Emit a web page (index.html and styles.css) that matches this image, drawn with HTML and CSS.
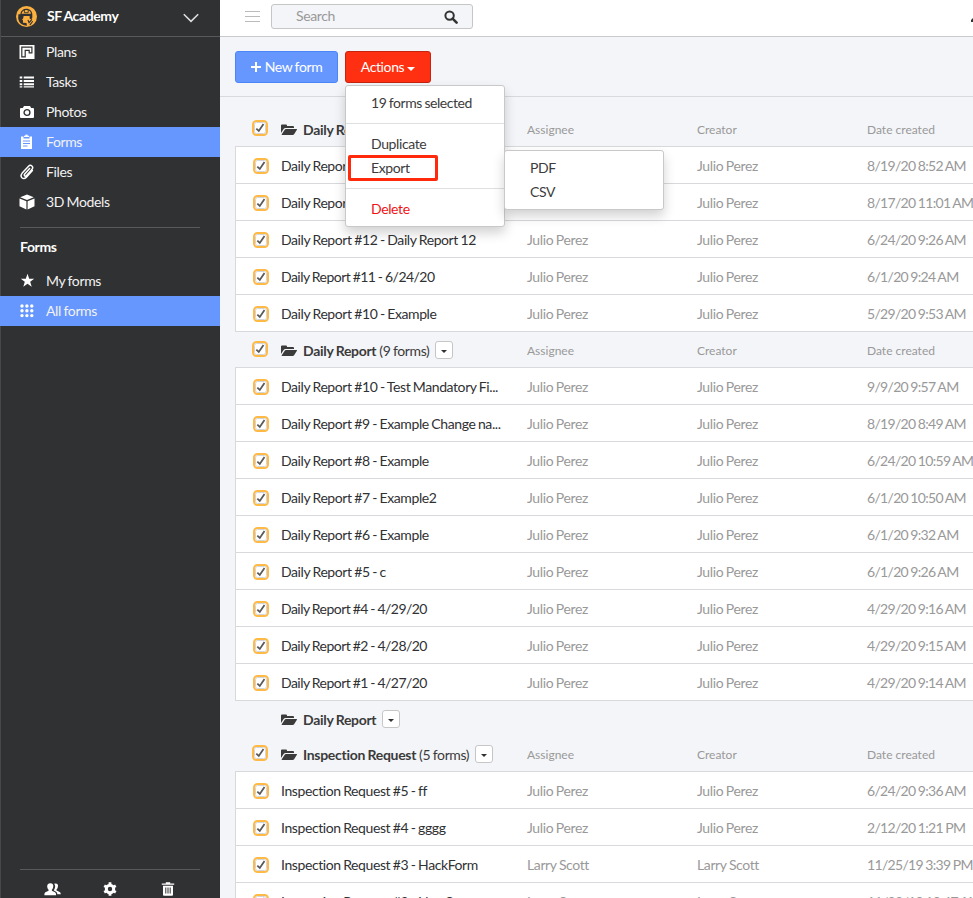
FILE: index.html
```html
<!DOCTYPE html>
<html lang="en">
<head>
<meta charset="utf-8">
<title>SF Academy - Forms</title>
<link rel="stylesheet" href="styles.css">
</head>
<body>
<svg class="defs" aria-hidden="true">
  <symbol id="check" viewBox="0 0 16 16"><rect x="1" y="1" width="14" height="14" rx="3.5" fill="#fff" stroke="#ffb945" stroke-width="2"/><rect x="2.5" y="2.5" width="11" height="11" rx="2" fill="#fff" stroke="#d3d5da"/><path d="M4.300 8.700l2.500 2.300 4.700-7" fill="none" stroke="#5a5a5a" stroke-width="1.800"/></symbol>
  <symbol id="folder" viewBox="0 0 17 12"><path d="M0 9V1.5Q0 .5 1 .5h4q1 0 1 1V2h6q1 0 1 1v1H4.5Q3.300 4 2.600 5z" fill="#3b3b3b"/><path d="M.6 10.600L3.700 5.700Q4 5 5 5h10.500q.9 0 .4.8l-2.800 4.400q-.5.8-1.400.8H1q-.6 0-.4-.4z" fill="#3b3b3b"/></symbol>
</svg>
<div class="app">
  <aside class="side">
    <header class="brand">
      <svg class="logo" viewBox="0 0 22 22"><circle cx="11" cy="11" r="11" fill="#fbb040"/><path d="M2.500 8.700h2C5 5 7.500 3 10.800 3s6 2.300 6.300 5.700v3.500l-1.200 2-1.600-1V10.500H8l-.5 2.700-1.200 1 1 .7v2.600l3.700.3.500 2.800-3-.4Q3.200 18.600 2.300 13z" fill="#303133"/><path d="M5.800 8.200Q6.500 4.300 10.800 4.200t5 4z" fill="#fbb040"/><path d="M8.800 4v3h4V4" fill="none" stroke="#303133" stroke-width=".9"/><path d="M12.500 14.500l1.200 3 3-3.500M14.500 20l3-4" fill="none" stroke="#303133" stroke-width="1.200"/></svg>
      <b>SF Academy</b>
      <svg class="chev" viewBox="0 0 16 10"><path d="M.8 1.200L8 8.400l7.200-7.200" fill="none" stroke="#ddd" stroke-width="1.600"/></svg>
    </header>
    <nav>
      <a class="item"><svg viewBox="0 0 16 16"><path fill="#fff" d="M.5 1h15v14H.5z"/><path fill="none" stroke="#303133" stroke-width="1.200" d="M12.900 8.800V3.200H2.800v9.600h3.400V6.300h4v2.500z"/></svg>Plans</a>
      <a class="item"><svg viewBox="0 0 16 16"><path fill="#fff" d="M.7 2.500h2.600v2H.7zM4.700 2.500H15v2H4.700zM.7 5.900h2.600v2H.7zM4.700 5.900H15v2H4.700zM.7 9.300h2.600v2H.7zM4.700 9.300H15v2H4.700zM.7 12.200h2.600v1.200H.7zM4.700 12.200H15v1.200H4.700z"/></svg>Tasks</a>
      <a class="item"><svg viewBox="0 0 16 16"><path fill="#fff" d="M5 2h6l1.200 2H14q1 0 1 1v8q0 1-1 1H2q-1 0-1-1V5q0-1 1-1h1.800z"/><circle cx="8" cy="8.500" r="2.900" fill="none" stroke="#303133" stroke-width="1.400"/></svg>Photos</a>
      <a class="item on"><svg viewBox="0 0 16 16"><path fill="#fff" d="M2 2.500h2.500v2h6v-2H13V15H2zM5 3V1.800h1.200Q6.300.4 7.500.4t1.300 1.400H10V3z"/><path stroke="#6697ff" d="M4 7h7M4 9.500h7M4 12h4.500"/></svg>Forms</a>
      <a class="item"><svg viewBox="0 0 16 16"><path fill="none" stroke="#fff" stroke-width="1.500" stroke-linecap="round" d="M10.600 4.500L5.700 10q-1 1.400.2 2 .9.500 1.700-.4l5.300-6q1.600-2.200 0-3.600-1.800-1.500-3.600.4L3.200 9.100q-2.200 2.700-.3 4.700 2.100 1.800 4.500-.6l6-6.600"/></svg>Files</a>
      <a class="item"><svg viewBox="0 0 16 16"><path fill="#fff" d="M8 .5l6.800 2.700L8 6 1.200 3.200zM.5 4.500l6.900 2.700v8.200L.5 12.300zM15.500 4.500L8.600 7.200v8.200l6.900-3.100z"/></svg>3D Models</a>
    </nav>
    <h2>Forms</h2>
    <nav>
      <a class="item"><svg viewBox="0 0 16 16"><path fill="#fff" d="M8.500.8l1.700 4.900h5l-4 3 1.500 5-4.200-3-4.200 3 1.500-5-4-3h5z"/></svg>My forms</a>
      <a class="item on"><svg viewBox="0 0 16 16"><path stroke="#fff" stroke-width="3.400" stroke-linecap="round" stroke-dasharray="0 4.900" d="M3 3h10M3 7.800h10M3 12.600h10"/></svg>All forms</a>
    </nav>
    <footer class="tools">
      <svg viewBox="0 0 16 14"><path fill="#fff" d="M6 1c2.200 0 3 1.400 2.700 3.300Q8.500 6 7.400 7.200v1l3 1.500q1 .6 1 2.800H.3q0-2.200 1-2.800l3-1.500v-1Q3.200 6 3 4.300 2.800 1 6 1zM9.500 1.500q3.500-1 3.700 1.800 0 2.500-1.400 3.800v.9l2.900 1.300q1.100.5 1.100 2.200h-3.200q-.1-1.700-1.200-2.300L9.300 8l.2-.8q1-1.500 1-3.300 0-1.400-1-2.400z"/></svg>
      <svg viewBox="0 0 14 14"><circle cx="7" cy="7" r="3.700" fill="none" stroke="#fff" stroke-width="3"/><path d="M7 .3v2.500M7 11.200v2.500M1.200 3.700l2.100 1.200M10.700 9.100l2.100 1.200M1.200 10.300l2.100-1.200M10.700 4.900l2.100-1.200" stroke="#fff" stroke-width="2.800"/></svg>
      <svg viewBox="0 0 14 14"><path fill="#fff" d="M.8 1.500h4V.3h4.400v1.200h4v1.300H.8zM2 3.700h10v9q0 1-1 1H3q-1 0-1-1z"/><path stroke="#303133" d="M4.800 5.500v6M7 5.500v6M9.200 5.500v6"/></svg>
    </footer>
  </aside>
  <main>
    <div class="top">
      <div class="burger"><i></i><i></i><i></i></div>
      <div class="search"><span>Search</span><svg viewBox="0 0 14 14"><circle cx="5.600" cy="5.600" r="4.200" fill="none" stroke="#333" stroke-width="2"/><path d="M8.600 8.600l4 4" stroke="#333" stroke-width="2.600" stroke-linecap="round"/></svg></div>
      <svg class="edge" viewBox="0 0 2 4"><path d="M2 0v4H0V2z" fill="#333"/></svg>
    </div>
    <div class="bar">
      <button class="btn new"><svg viewBox="0 0 10 10"><path d="M5 0v10M0 5h10" stroke="#fff" stroke-width="2"/></svg>New form</button>
      <div class="drop">
        <button class="btn act">Actions<i class="caret"></i></button>
        <div class="menu">
          <div class="count">19 forms selected</div>
          <div class="mid"><div>Duplicate</div><div class="export">Export<span class="mark"></span><div class="sub"><div>PDF</div><div>CSV</div></div></div></div>
          <div class="del">Delete</div>
        </div>
      </div>
    </div>
    <section class="group first">
      <div class="head cols"><svg class="ck"><use href="#check"/></svg><div class="title"><svg><use href="#folder"/></svg><b>Daily Report</b></div><span>Assignee</span><span>Creator</span><span>Date created</span></div>
      <div class="list">
        <div class="row cols"><svg class="ck"><use href="#check"/></svg><p>Daily Report</p><span></span><span>Julio Perez</span><span class="date">8/19/20 8:52 AM</span></div>
        <div class="row cols"><svg class="ck"><use href="#check"/></svg><p>Daily Report</p><span></span><span>Julio Perez</span><span class="date">8/17/20 11:01 AM</span></div>
        <div class="row cols"><svg class="ck"><use href="#check"/></svg><p>Daily Report #12 - Daily Report 12</p><span>Julio Perez</span><span>Julio Perez</span><span class="date">6/24/20 9:26 AM</span></div>
        <div class="row cols"><svg class="ck"><use href="#check"/></svg><p class="dated">Daily Report #11 - 6/24/20</p><span>Julio Perez</span><span>Julio Perez</span><span class="date">6/1/20 9:24 AM</span></div>
        <div class="row cols"><svg class="ck"><use href="#check"/></svg><p>Daily Report #10 - Example</p><span>Julio Perez</span><span>Julio Perez</span><span class="date">5/29/20 9:53 AM</span></div>
      </div>
    </section>
    <section class="group">
      <div class="head cols"><svg class="ck"><use href="#check"/></svg><div class="title"><svg><use href="#folder"/></svg><b>Daily Report</b><span>(9 forms)</span><button><i class="caret"></i></button></div><span>Assignee</span><span>Creator</span><span>Date created</span></div>
      <div class="list">
        <div class="row cols"><svg class="ck"><use href="#check"/></svg><p>Daily Report #10 - Test Mandatory Fi...</p><span>Julio Perez</span><span>Julio Perez</span><span class="date">9/9/20 9:57 AM</span></div>
        <div class="row cols"><svg class="ck"><use href="#check"/></svg><p>Daily Report #9 - Example Change na...</p><span>Julio Perez</span><span>Julio Perez</span><span class="date">8/19/20 8:49 AM</span></div>
        <div class="row cols"><svg class="ck"><use href="#check"/></svg><p>Daily Report #8 - Example</p><span>Julio Perez</span><span>Julio Perez</span><span class="date">6/24/20 10:59 AM</span></div>
        <div class="row cols"><svg class="ck"><use href="#check"/></svg><p>Daily Report #7 - Example2</p><span>Julio Perez</span><span>Julio Perez</span><span class="date">6/1/20 10:50 AM</span></div>
        <div class="row cols"><svg class="ck"><use href="#check"/></svg><p>Daily Report #6 - Example</p><span>Julio Perez</span><span>Julio Perez</span><span class="date">6/1/20 9:32 AM</span></div>
        <div class="row cols"><svg class="ck"><use href="#check"/></svg><p>Daily Report #5 - c</p><span>Julio Perez</span><span>Julio Perez</span><span class="date">6/1/20 9:26 AM</span></div>
        <div class="row cols"><svg class="ck"><use href="#check"/></svg><p class="dated">Daily Report #4 - 4/29/20</p><span>Julio Perez</span><span>Julio Perez</span><span class="date">4/29/20 9:16 AM</span></div>
        <div class="row cols"><svg class="ck"><use href="#check"/></svg><p class="dated">Daily Report #2 - 4/28/20</p><span>Julio Perez</span><span>Julio Perez</span><span class="date">4/29/20 9:15 AM</span></div>
        <div class="row cols"><svg class="ck"><use href="#check"/></svg><p class="dated">Daily Report #1 - 4/27/20</p><span>Julio Perez</span><span>Julio Perez</span><span class="date">4/29/20 9:14 AM</span></div>
      </div>
    </section>
    <section class="group">
      <div class="head cols"><i></i><div class="title"><svg><use href="#folder"/></svg><b>Daily Report</b><button><i class="caret"></i></button></div></div>
    </section>
    <section class="group">
      <div class="head cols"><svg class="ck"><use href="#check"/></svg><div class="title"><svg><use href="#folder"/></svg><b>Inspection Request</b><span>(5 forms)</span><button><i class="caret"></i></button></div><span>Assignee</span><span>Creator</span><span>Date created</span></div>
      <div class="list">
        <div class="row cols"><svg class="ck"><use href="#check"/></svg><p>Inspection Request #5 - ff</p><span>Julio Perez</span><span>Julio Perez</span><span class="date">6/24/20 9:36 AM</span></div>
        <div class="row cols"><svg class="ck"><use href="#check"/></svg><p>Inspection Request #4 - gggg</p><span>Julio Perez</span><span>Julio Perez</span><span class="date">2/12/20 1:21 PM</span></div>
        <div class="row cols"><svg class="ck"><use href="#check"/></svg><p>Inspection Request #3 - HackForm</p><span>Larry Scott</span><span>Larry Scott</span><span class="date">11/25/19 3:39 PM</span></div>
        <div class="row cols"><svg class="ck"><use href="#check"/></svg><p>Inspection Request #2 - NewScan</p><span>Larry Scott</span><span>Larry Scott</span><span class="date">11/22/19 10:47 AM</span></div>
      </div>
    </section>
  </main>
</div>
</body>
</html>
```
FILE: styles.css
```css
* { box-sizing: border-box; }
body { margin: 0; font: 14px/20px Lato, "Liberation Sans", sans-serif; letter-spacing: -.38px; word-spacing: -.6px; color: #303133; overflow: hidden; }
b { font-weight: 700; }
p { margin: 0; }
button { font: inherit; padding: 0; letter-spacing: inherit; word-spacing: inherit; }
.defs { display: none; }
.app { display: flex; width: 973px; height: 898px; overflow: hidden; background: #f4f5f8; }
.side { width: 220px; flex: none; display: flex; flex-direction: column; background: #303133; color: #fff; border-left: 1px solid #47484b; }
.brand { height: 37px; flex: none; display: flex; align-items: center; padding: 0 20px 4px 15px; border-bottom: 1px solid #58595b; }
.logo { width: 21px; height: 21px; margin: 1px 10px 0 0; }
.chev { width: 16px; height: 10px; margin-left: auto; margin-right: 1px; margin-top: 4px; }
.item { height: 30px; display: flex; align-items: center; padding-left: 19px; color: #f2f2f2; margin-left: -1px; }
.item svg { width: 16px; height: 16px; margin-right: 11px; }
.on { background: #6697ff; }
.side h2 { margin: 10px 20px 0 19px; padding-top: 9px; height: 39px; border-top: 1px solid #58595b; font-size: 14px; line-height: 20px; }
.tools { height: 29px; margin: auto 20px 0 19px; border-top: 1px solid #58595b; display: flex; justify-content: space-between; align-items: flex-start; padding: 12px 25px 0 24px; }
.tools svg { width: 14px; height: 14px; }
.tools svg:first-child { width: 17px; height: 15px; margin-right: -2px; }
main { width: 753px; flex: none; }
.top { height: 37px; display: flex; align-items: flex-start; background: #fff; border-bottom: 1px solid #c9cacc; padding: 4px 0 0 25px; }
.burger { width: 15px; padding-top: 7px; display: flex; flex-direction: column; gap: 4px; margin-right: 11px; }
.burger i { height: 1px; background: #bbb; }
.search { width: 202px; height: 25px; border: 1px solid #c6c6c6; border-radius: 3px; background: #f4f5f8; color: #999; display: flex; align-items: center; justify-content: space-between; padding: 0 14px 1px 24px; }
.search svg { width: 14px; height: 14px; margin-top: 1px; }
.edge { width: 2px; height: 4px; margin: 14px 0 0 auto; }
.bar { height: 60px; display: flex; gap: 7px; padding: 14px 15px; border-bottom: 1px solid #d8d9dc; }
.btn { height: 32px; border: 1px solid #4a86f7; border-radius: 3px; background: #6697ff; color: #fff; display: flex; align-items: center; justify-content: center; }
.new { width: 103px; }
.new svg { width: 10px; height: 10px; margin-right: 4px; }
.act { width: 86px; background: #ff2f12; border-color: #c52410; }
.caret { border: 4px solid transparent; border-top-color: currentColor; border-bottom: 0; margin: 3px 0 0 3px; }
.drop { position: relative; }
.menu, .sub { position: absolute; background: #fff; border: 1px solid #c8c8c8; border-radius: 3px; box-shadow: 0 6px 12px rgba(0,0,0,.18); color: #3c3c3c; }
.menu { left: 0; top: 34px; width: 160px; height: 142px; z-index: 2; line-height: 24px; }
.menu > div { padding-left: 25px; }
.count { height: 38px; padding-top: 5px; border-bottom: 1px solid #dedfe1; letter-spacing: -.45px; }
.mid { height: 65px; padding-top: 8px; border-bottom: 1px solid #dedfe1; }
.del { padding-top: 8px; color: #f01414; }
.export { position: relative; }
.mark { position: absolute; left: -23px; top: -1px; width: 90px; height: 26px; border: 3px solid #ff2a0c; border-radius: 2px; }
.sub { left: 133px; top: -6px; width: 160px; height: 60px; padding: 5px 0 0 25px; }
.group { padding-left: 15px; }
.cols { display: grid; grid-template-columns: 28px 246px 170px 170px 124px; align-items: center; }
.ck { width: 16px; height: 16px; }
.head { height: 35px; padding-left: 18px; color: #999; font-size: 12px; }
.first .head { height: 49px; padding-top: 14px; }
.head .ck { margin: -1px 0 0 -1px; }
.title { display: flex; align-items: center; font-size: 14px; color: #3b3b3b; padding-top: 3px; }
.title b { letter-spacing: -.3px; }
.head > span { padding-top: 3px; letter-spacing: 0; word-spacing: 0; }
.title > svg { width: 17px; height: 12px; margin-right: 5px; }
.title span { margin-left: 3px; }
.title button { width: 18px; height: 18px; margin: -2px 0 0 6px; border: 1px solid #c6c6c6; border-radius: 3px; background: #fff; display: flex; align-items: center; justify-content: center; color: #303133; }
.title .caret { margin: 2px 0 0; border-width: 3px; border-bottom: 0; }
.list { border: 1px solid #d8d9dc; border-width: 1px 0 0 1px; background: #fff; }
.row { height: 37px; padding: 2px 0 0 17px; border-bottom: 1px solid #d8d9dc; }
.row > span { color: #999; white-space: nowrap; }
.row p { white-space: nowrap; letter-spacing: -.41px; }
.row .dated { letter-spacing: -.53px; }
.row .date { letter-spacing: -.68px; }
```
